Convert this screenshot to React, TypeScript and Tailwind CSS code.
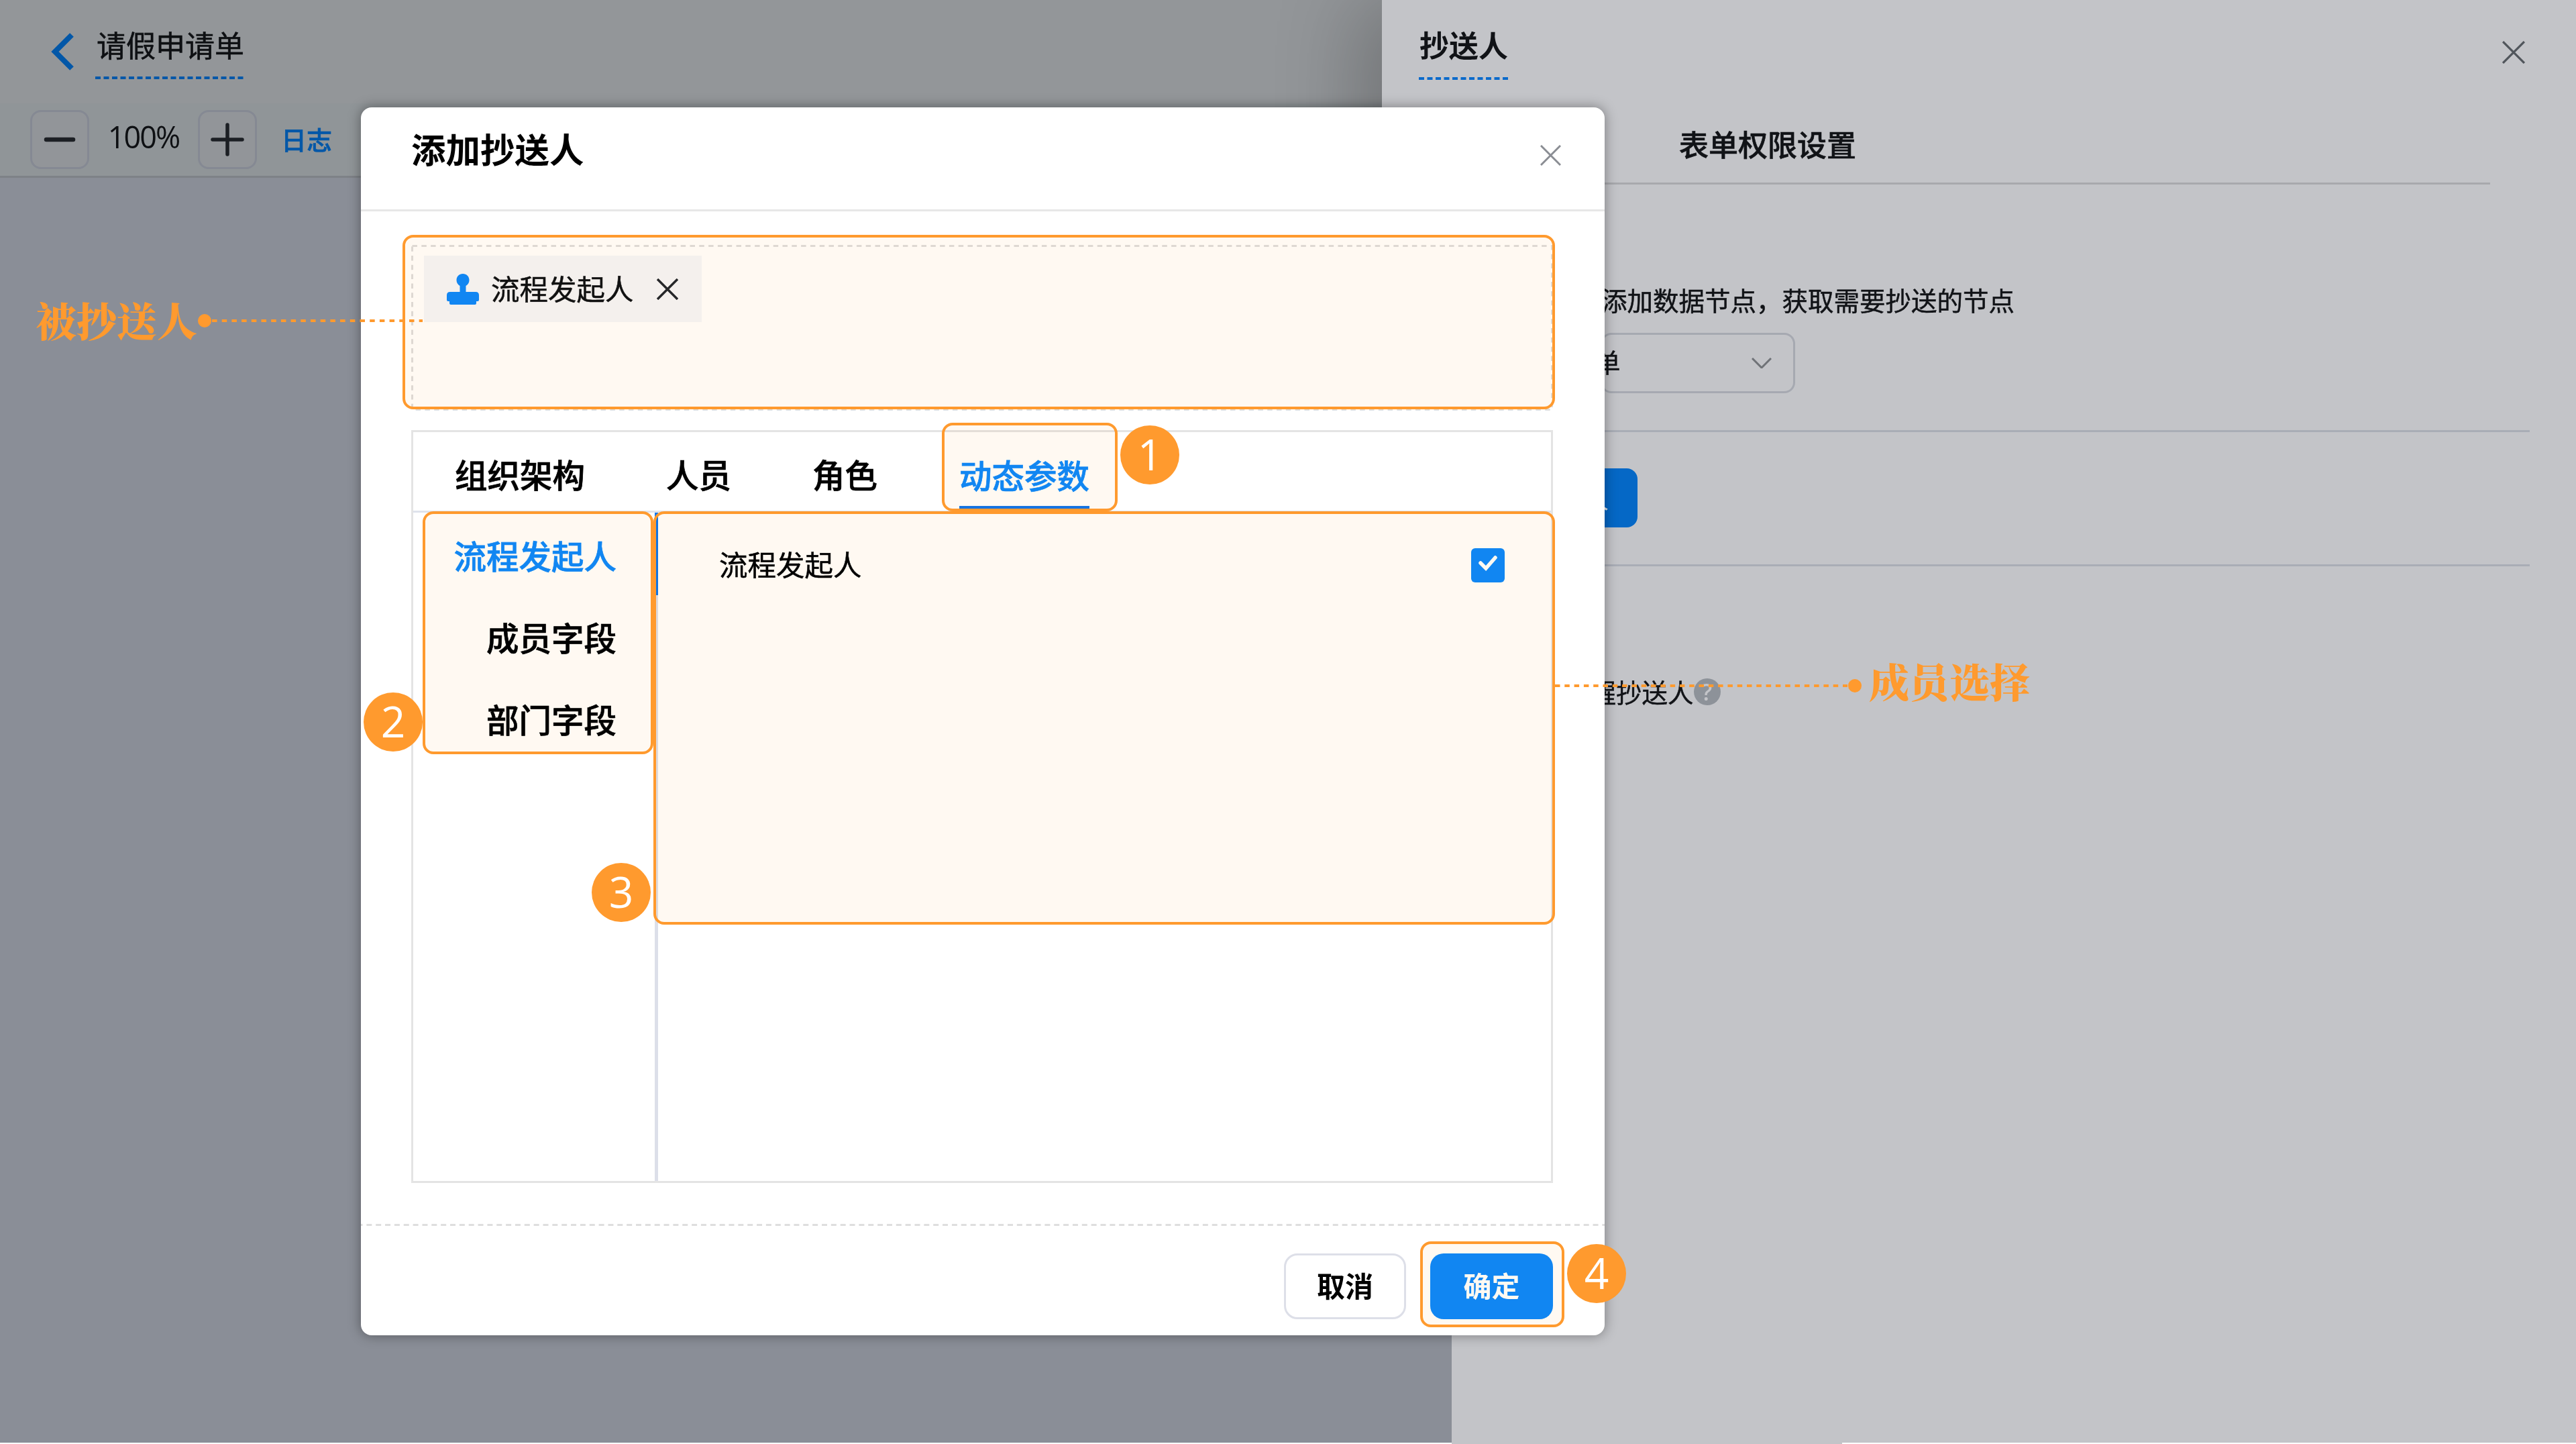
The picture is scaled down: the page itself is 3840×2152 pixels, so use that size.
import type { ReactNode } from "react";

const TABS = ["组织架构", "人员", "角色", "动态参数"];
const FIELDS = ["流程发起人", "成员字段", "部门字段"];

function CloseIcon({ className, width = 3 }: { className: string; width?: number }) {
  return (
    <svg viewBox="0 0 32 32" className={className} fill="none" stroke="currentColor" strokeWidth={width}>
      <path d="M1 1L31 31M31 1L1 31" />
    </svg>
  );
}

function StampIcon() {
  return (
    <svg viewBox="0 0 48 46" className="h-[46px] w-12 fill-[#1189ff]">
      <path d="M24 0C29.5 0 33.500 4 33.500 9.500C33.500 13.500 31.500 16 28.500 18V27H43Q48 27 48 32V39Q48 41 46 41H44V44Q44 46 42 46H6Q4 46 4 44V41H2Q0 41 0 39V32Q0 27 5 27H19.500V18C16.500 16 14.500 13.500 14.500 9.500C14.500 4 18.500 0 24 0Z" />
    </svg>
  );
}

function ZoomButton({ children }: { children: ReactNode }) {
  return (
    <button className="flex size-[88px] items-center justify-center rounded-2xl border-[3px] border-[#858993] bg-[#929599] text-[#1c1f24]">
      {children}
    </button>
  );
}

// 橙色标注框，底色用正片叠底，不影响下方文字颜色
function Mark({ className }: { className: string }) {
  return (
    <div className={`absolute ${className}`}>
      <div className="absolute inset-0 rounded-2xl bg-[#fff9f2] mix-blend-multiply" />
      <div className="absolute inset-0 rounded-2xl border-4 border-[#ff9a2e]" />
    </div>
  );
}

function Badge({ n, className }: { n: number; className: string }) {
  return (
    <div
      className={`absolute flex size-[88px] items-center justify-center rounded-full bg-[#ff9a2e] pb-0.5 font-['Open_Sans','Noto_Sans',sans-serif] text-[64px] leading-none text-white ${className}`}
    >
      {n}
    </div>
  );
}

function Page() {
  return (
    <div className="flex h-[2150px] flex-col bg-[#8a8e97]">
      <header className="flex h-[154px] items-start bg-[#939699] pl-[76px]">
        <svg viewBox="0 0 34 56" className="mt-[49px] h-14 w-[34px]" fill="none" stroke="#0257a8" strokeWidth="8">
          <path d="M31 3L6 28L31 53" />
        </svg>
        <div className="mt-[33px] ml-8 flex flex-col">
          <span className="h-[81px] pl-0.5 text-[44px] leading-[66px] text-[#0e1013] [-webkit-text-stroke:0.6px]">请假申请单</span>
          <svg className="h-1 w-[221px]">
            <line x1="0" y1="2" x2="221" y2="2" stroke="#0257a8" strokeWidth="4" strokeDasharray="8 4.5" />
          </svg>
        </div>
      </header>
      <div className="flex h-[111px] items-center border-b-[3px] border-[#7e8287] bg-[#909598] pl-[45px]">
        <ZoomButton>
          <svg viewBox="0 0 50 50" className="size-[50px]" stroke="currentColor" strokeWidth="6.500" strokeLinecap="round">
            <path d="M5 25H45" />
          </svg>
        </ZoomButton>
        <span className="w-[162px] pb-2 text-center font-['Open_Sans','Noto_Sans',sans-serif] text-[45px] tracking-[-2px] text-[#0e1013]">
          100%
        </span>
        <ZoomButton>
          <svg viewBox="0 0 50 50" className="size-[50px]" stroke="currentColor" strokeWidth="5.500" strokeLinecap="round">
            <path d="M3 25H47M25 3V47" />
          </svg>
        </ZoomButton>
        <span className="ml-9 pb-1 text-[38px] font-medium text-[#0257a8] [-webkit-text-stroke:0.6px]">日志</span>
      </div>
    </div>
  );
}

function Drawer() {
  return (
    <aside className="absolute top-0 right-0 flex h-[2152px] w-[1676px] flex-col bg-[#c3c4c8] text-[#111317]">
      <div className="-ml-[104px] flex h-[300px] flex-col bg-[#c3c4c8] pl-[55px] shadow-[-40px_0_120px_rgba(0,0,0,0.22)] [clip-path:inset(0_0_0_-200px)]">
        <div className="flex h-[118px] items-start justify-between pr-[76px]">
          <div className="mt-[33px] flex flex-col">
            <span className="h-[82px] pl-px text-[44px] leading-[66px] font-bold">抄送人</span>
            <svg className="h-1 w-[133px]">
              <line x1="0" y1="2" x2="133" y2="2" stroke="#0a6acb" strokeWidth="4" strokeDasharray="8 4.500" />
            </svg>
          </div>
          <CloseIcon className="mt-[61px] size-[34px] text-[#50555b]" />
        </div>
        <div className="mr-32 flex h-[157px] items-end border-b-[3px] border-[#a8a9ad] pb-[25px] pl-[388px]">
          <span className="text-[44px] leading-[66px] font-medium [-webkit-text-stroke:0.6px]">表单权限设置</span>
        </div>
      </div>
      <div className="mr-[69px] flex h-[344px] flex-col border-b-[3px] border-[#a9adb6] pl-[222px]">
        <p className="mt-[117px] pl-px text-[38.500px] leading-[58px] [-webkit-text-stroke:0.5px]">添加数据节点，获取需要抄送的节点</p>
        <div className="mt-[21px] flex h-[90px] w-[290px] items-center justify-between rounded-2xl border-[3px] border-[#a6a9b1] pr-8">
          <span className="-ml-3 pb-[5px] text-[38.500px] [-webkit-text-stroke:0.5px]">单</span>
          <svg viewBox="0 0 30 16" className="h-4 w-[30px]" fill="none" stroke="#6f7277" strokeWidth="3">
            <path d="M1 1L15 15L29 1" />
          </svg>
        </div>
      </div>
      <div className="mr-[69px] flex h-[200px] border-b-[3px] border-[#a9adb6] pt-[54px]">
        <button className="h-[88px] w-[277px] rounded-2xl bg-[#0568c6] pr-[43px] text-right text-[38.500px] text-[#e3e5e8]">
          添加抄送人
        </button>
      </div>
      <div className="mt-[157px] flex items-center pl-[168px]">
        <span className="pb-0.5 text-[38.500px] leading-[58px] [-webkit-text-stroke:0.5px]">提醒抄送人</span>
        <span className="flex size-10 items-center justify-center rounded-full bg-[#8d9299] font-['Open_Sans','Noto_Sans',sans-serif] text-[34px] font-semibold text-[#c3c4c8]">
          ?
        </span>
      </div>
      <div className="mt-auto ml-[582px] h-0.5 bg-white" />
    </aside>
  );
}

function Modal() {
  return (
    <section className="absolute top-[160px] left-[538px] flex h-[1830px] w-[1854px] flex-col rounded-2xl bg-white text-black shadow-[0_0_18px_1px_rgba(0,0,0,0.35)]">
      <header className="flex h-[155px] items-start justify-between border-b-[3px] border-[#e7e7e7] pr-[65px] pl-[75px]">
        <h1 className="mt-[22px] text-[51.500px] leading-[78px] font-bold">添加抄送人</h1>
        <CloseIcon className="mt-14 size-[31px] text-[#8a8d93]" />
      </header>

      <div className="relative mt-[50px] mr-[77px] ml-[75px] flex h-[247px] items-start p-4 pl-[19px]">
        <svg className="absolute inset-0 size-full" fill="none" stroke="#dedede" strokeWidth="3" strokeDasharray="7.500 6.300">
          <rect x="1.500" y="1.500" width="1699" height="244" />
        </svg>
        <div className="relative flex h-[99px] w-[414px] items-center bg-[#f4f6fa] pl-[34px]">
          <StampIcon />
          <span className="ml-[18px] pb-1 text-[42.500px] text-[#111] [-webkit-text-stroke:0.5px]">流程发起人</span>
          <CloseIcon className="ml-[34px] size-8 text-[#26282b]" width={3.5} />
        </div>
      </div>

      <div className="mt-[29px] mr-[77px] ml-[75px] flex h-[1122px] flex-col border-[3px] border-[#e4e4e4]">
        <nav className="flex h-[120px] items-end border-b-[3px] border-[#dfe3ec] pl-[62px] text-[48.500px] font-medium [-webkit-text-stroke:0.7px]">
          {TABS.map((tab, i) => (
            <div
              key={tab}
              className={
                i === 3
                  ? "-mb-px ml-[122px] border-b-8 border-[#1677ee] text-[#1189ff]"
                  : i < 2
                    ? "mr-[121px]"
                    : ""
              }
            >
              <span className={i === 3 ? "block h-[83px] leading-[72px]" : "block h-[91px] leading-[72px]"}>{tab}</span>
            </div>
          ))}
        </nav>
        <div className="flex grow">
          <ul className="w-[360px] shrink-0 text-right text-[48.500px] font-medium [-webkit-text-stroke:0.7px]">
            {FIELDS.map((field, i) => (
              <li
                key={field}
                className={
                  i === 0
                    ? "h-[122px] pt-[27px] pr-[57px] leading-[72px] text-[#1189ff]"
                    : "h-[122px] pt-[27px] pr-[57px] leading-[72px]"
                }
              >
                {field}
              </li>
            ))}
          </ul>
          <div className="w-[5px] shrink-0 bg-[#dcdfe9]">
            <div className="h-[123px] bg-[#1177ee]" />
          </div>
          <div className="flex h-[157px] grow items-center justify-between pr-[69px] pl-[91px]">
            <span className="pb-1.5 text-[42.500px] [-webkit-text-stroke:0.5px]">流程发起人</span>
            <span className="flex h-[51px] w-[50px] items-center justify-center rounded-md bg-[#1189ff]">
              <svg viewBox="0 0 30 24" className="mb-2 h-6 w-[30px]" fill="none" stroke="#fff" strokeWidth="5.500" strokeLinecap="round">
                <path d="M4 12L12 20L26 4" />
              </svg>
            </span>
          </div>
        </div>
      </div>

      <svg className="mt-[61px] h-[3px] w-full">
        <line
          x1="0"
          y1="1.500"
          x2="1854"
          y2="1.500"
          stroke="#dedede"
          strokeWidth="3"
          strokeDasharray="8 5.850"
          strokeDashoffset="5.500"
        />
      </svg>
      <footer className="mt-[41px] mr-[77px] flex justify-end gap-9 text-[42px]">
        <button className="h-[98px] w-[182px] rounded-[20px] border-[3px] border-[#dddfe8] pb-1.5 font-bold">取消</button>
        <button className="h-[98px] w-[183px] rounded-[20px] bg-[#1189ff] pb-1.5 font-bold text-white">确定</button>
      </footer>
    </section>
  );
}

function Annotations() {
  return (
    <>
      <Mark className="top-[350px] left-[600px] h-[260px] w-[1718px]" />
      <Mark className="top-[630px] left-[1404px] h-[132px] w-[262px]" />
      <Mark className="top-[762px] left-[630px] h-[362px] w-[344px]" />
      <Mark className="top-[762px] left-[974px] h-[616px] w-[1344px]" />
      <Mark className="top-[1850px] left-[2117px] h-[128px] w-[215px]" />

      <Badge n={1} className="top-[634px] left-[1670px]" />
      <Badge n={2} className="top-[1032px] left-[542px]" />
      <Badge n={3} className="top-[1286px] left-[882px]" />
      <Badge n={4} className="top-[1854px] left-[2336px]" />

      <div className="absolute top-[433px] left-[54px] flex h-[90px] items-center text-[#ff9a2e]">
        <span className="pb-1 font-['Noto_Serif_CJK_SC','Noto_Sans_CJK_SC',serif] text-[60px] leading-[90px] font-black">被抄送人</span>
        <svg className="h-5 w-[340px]" fill="currentColor" stroke="none">
          <circle cx="11" cy="10" r="10" />
          <line x1="22" y1="10" x2="336" y2="10" stroke="currentColor" strokeWidth="4" strokeDasharray="7.500 7.200" />
        </svg>
      </div>

      <div className="absolute top-[972px] left-[2318px] flex h-[90px] items-center text-[#ff9a2e]">
        <svg className="mt-2.5 h-5 w-[468px]" fill="currentColor" stroke="none">
          <line x1="0" y1="10" x2="436" y2="10" stroke="currentColor" strokeWidth="4" strokeDasharray="7.500 6.800" />
          <circle cx="447" cy="10" r="10" />
        </svg>
        <span className="pb-1.5 font-['Noto_Serif_CJK_SC','Noto_Sans_CJK_SC',serif] text-[60px] leading-[90px] font-black">成员选择</span>
      </div>
    </>
  );
}

export default function App() {
  return (
    <div className="relative h-[2152px] w-[3840px] overflow-hidden bg-white font-['Noto_Sans_CJK_SC',sans-serif]">
      <Page />
      <Drawer />
      <Modal />
      <Annotations />
    </div>
  );
}
